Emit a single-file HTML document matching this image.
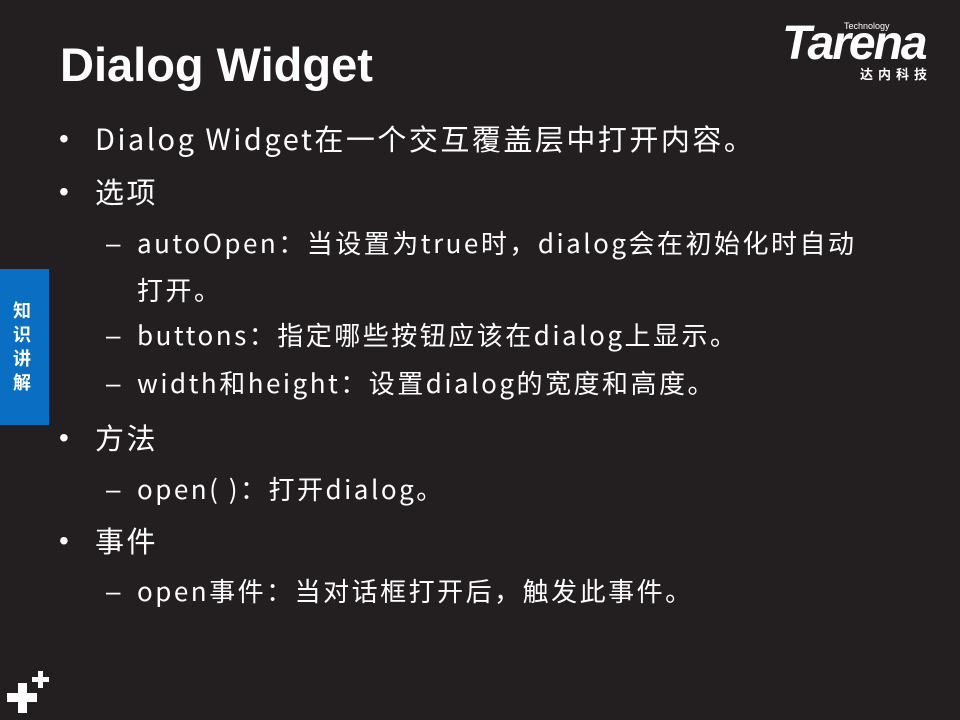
<!DOCTYPE html>
<html><head><meta charset="utf-8"><style>
body{margin:0;width:960px;height:720px;background:#231f20;position:relative;overflow:hidden;font-family:"Noto Sans CJK SC","Liberation Sans",sans-serif;color:#fff}
.a{position:absolute;white-space:nowrap;line-height:1}
.t{left:60px;top:41px;font-size:47px;font-weight:bold;font-family:"Liberation Sans",sans-serif}
.l1{font-size:29px;left:95px;letter-spacing:2.5px}
.l2{font-size:26px;left:137px;letter-spacing:2.5px}
.b1{left:59px;font-size:28px;font-family:"Liberation Sans",sans-serif}
.b2{left:106px;font-size:26px;font-family:"Liberation Sans",sans-serif}
</style></head><body>
<div class="a t">Dialog Widget</div>
<div class="a" style="left:782px;top:20px;width:165px;height:62px;font-family:'Liberation Sans',sans-serif">
<div class="a" style="left:62px;top:2px;font-size:9px">Technology</div>
<div class="a" style="left:0;top:4px;font-size:48px;font-weight:bold;font-style:italic;letter-spacing:-2px;line-height:40px">Tarena</div>
<div class="a" style="left:78px;top:47px;font-size:13px;font-weight:bold;letter-spacing:5px;font-family:'Noto Sans CJK SC',sans-serif">达内科技</div>
</div>
<div class="a" style="left:0;top:269px;width:49px;height:156px;background:#0a6fc2"></div>
<div class="a" style="left:13px;top:298px;font-size:18px;font-weight:bold;line-height:24px;white-space:normal;width:20px">知识讲解</div>

<div class="a b1" style="top:125px">•</div><div class="a l1" style="top:124px">Dialog Widget在一个交互覆盖层中打开内容。</div>
<div class="a b1" style="top:178px">•</div><div class="a l1" style="top:177px">选项</div>
<div class="a b2" style="top:230px">–</div><div class="a l2" style="top:230px">autoOpen：当设置为true时，dialog会在初始化时自动</div>
<div class="a l2" style="top:277px">打开。</div>
<div class="a b2" style="top:322px">–</div><div class="a l2" style="top:322px">buttons：指定哪些按钮应该在dialog上显示。</div>
<div class="a b2" style="top:370px">–</div><div class="a l2" style="top:370px">width和height：设置dialog的宽度和高度。</div>
<div class="a b1" style="top:424px">•</div><div class="a l1" style="top:423px">方法</div>
<div class="a b2" style="top:476px">–</div><div class="a l2" style="top:476px">open( )：打开dialog。</div>
<div class="a b1" style="top:527px">•</div><div class="a l1" style="top:526px">事件</div>
<div class="a b2" style="top:578px">–</div><div class="a l2" style="top:578px">open事件：当对话框打开后，触发此事件。</div>

<svg class="a" style="left:0;top:660px" width="60" height="60">
<rect x="7" y="33" width="30" height="9" fill="#fff"/><rect x="18" y="23" width="9" height="30" fill="#fff"/>
<rect x="32" y="17" width="17" height="5" fill="#fff"/><rect x="38" y="11" width="5" height="17" fill="#fff"/>
</svg>
</body></html>
